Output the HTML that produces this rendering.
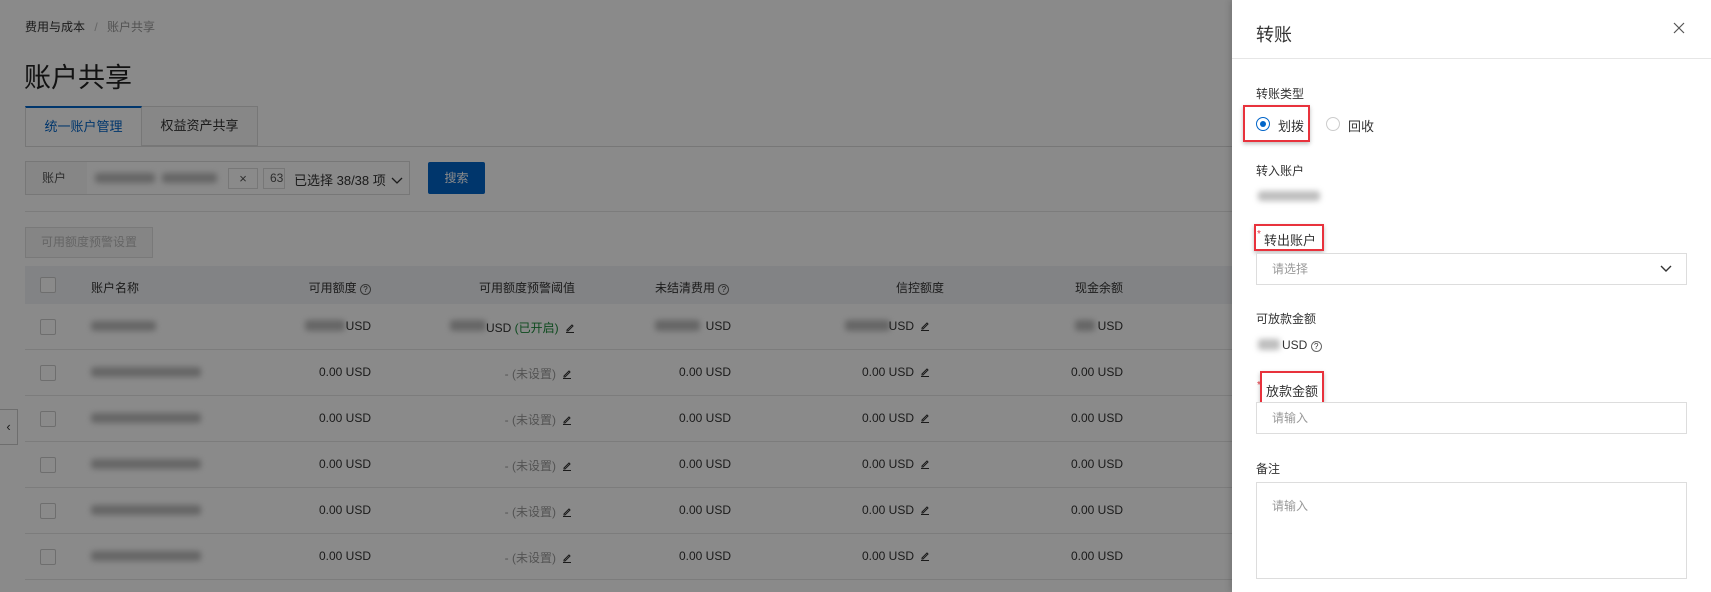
<!DOCTYPE html>
<html><head><meta charset="utf-8"><style>
*{box-sizing:border-box;margin:0;padding:0}
html,body{width:1711px;height:592px;overflow:hidden}
body{position:relative;background:#fff;font-family:"Liberation Sans","Noto Sans CJK SC",sans-serif;font-size:12px;color:#333}
#w{position:absolute;left:0;top:0;width:1711px;height:592px;overflow:hidden}
.a{position:absolute;white-space:nowrap}
.blur{position:absolute;background:#888;filter:blur(3px);border-radius:3px;opacity:.55}
.cb{position:absolute;width:16px;height:16px;border:1px solid #ccc;background:#fff;border-radius:2px}
.row{position:absolute;left:25px;width:1300px;height:46px;border-bottom:1px solid #e6e6e6}
.r{text-align:right}
.ed{display:inline-block;width:10px;height:10px;margin-left:6px;vertical-align:-1px}
#ov{position:absolute;left:0;top:0;width:1232px;height:592px;background:rgba(0,0,0,.46)}
.lbl{font-size:12px;color:#333}
.inp{position:absolute;border:1px solid #ddd;background:#fff;color:#999;font-size:12px}
.red{position:absolute;border:2px solid #e8323c;box-shadow:0 2px 4px rgba(0,0,0,.25)}
.q{display:inline-block;width:11px;height:11px;border:1px solid #666;border-radius:50%;font-size:8px;line-height:9px;text-align:center}
</style></head><body><div id="w">
<div class="a" style="left:25px;top:18px;font-size:12px;color:#333">费用与成本 <span style="color:#bbb;margin:0 6px">/</span> <span style="color:#999">账户共享</span></div>
<div class="a" style="left:24px;top:56px;font-size:27px;color:#222">账户共享</div>
<div class="a" style="left:25px;top:106px;width:117px;height:41px;border:1px solid #ddd;border-top:2px solid #0064c8;border-bottom:none;background:#fff;color:#0064c8;font-size:13px;text-align:center;line-height:38px">统一账户管理</div>
<div class="a" style="left:142px;top:106px;width:116px;height:40px;border:1px solid #ddd;border-left:none;background:#fafafa;font-size:13px;text-align:center;line-height:38px">权益资产共享</div>
<div class="a" style="left:25px;top:146px;width:1210px;border-top:1px solid #ddd"></div>
<div class="a" style="left:25px;top:161px;width:385px;height:34px;border:1px solid #ddd;background:#fff"></div>
<div class="a" style="left:26px;top:162px;width:61px;height:32px;background:#f7f7f7;color:#555;line-height:32px;padding-left:16px">账户</div>
<div class="blur" style="left:95px;top:173px;width:60px;height:10px"></div>
<div class="blur" style="left:162px;top:173px;width:55px;height:10px"></div>
<div class="a" style="left:228px;top:168px;width:30px;height:21px;border:1px solid #ddd;text-align:center;line-height:19px;color:#555;font-size:13px">×</div>
<div class="a" style="left:263px;top:168px;width:22px;height:21px;border:1px solid #ddd;line-height:19px;padding-left:6px;color:#555;overflow:hidden">63</div>
<div class="a" style="left:294px;top:170px;font-size:13px;color:#333">已选择 38/38 项 <svg width="12" height="8" viewBox="0 0 12 8" style="margin-left:2px"><path d="M1 1l5 5 5-5" fill="none" stroke="#333" stroke-width="1.3"/></svg></div>
<div class="a" style="left:428px;top:162px;width:57px;height:32px;background:#0064c8;color:#fff;text-align:center;line-height:32px;border-radius:2px">搜索</div>
<div class="a" style="left:25px;top:211px;width:1210px;border-top:1px solid #e6e6e6"></div>
<div class="a" style="left:25px;top:227px;width:128px;height:31px;border:1px solid #e0e0e0;background:#f5f5f5;color:#bbb;text-align:center;line-height:29px">可用额度预警设置</div>
<div class="a" style="left:25px;top:266px;width:1300px;height:38px;background:#f1f3f6"></div>
<div class="cb" style="left:40px;top:277px"></div>
<div class="a" style="left:91px;top:279px">账户名称</div>
<div class="a r" style="left:200px;width:171px;top:279px">可用额度 <span class="q">?</span></div>
<div class="a r" style="left:400px;width:175px;top:279px">可用额度预警阈值</div>
<div class="a" style="left:655px;top:279px">未结清费用 <span class="q">?</span></div>
<div class="a r" style="left:820px;width:124px;top:279px">信控额度</div>
<div class="a r" style="left:1000px;width:123px;top:279px">现金余额</div>
<div id="rows"></div>
<script>
var h='',E='<svg class="ed" viewBox="0 0 10 10"><path d="M2 7l5-5 1 1-5 5H2zM1 9.5h8" fill="none" stroke="#333"/></svg>';
for(var i=0;i<7;i++){
var t=304+i*46, c=t+15;
h+='<div class="row" style="top:'+t+'px"></div>';
h+='<div class="cb" style="left:40px;top:'+c+'px"></div>';
h+='<div class="blur" style="left:91px;top:'+(c+2)+'px;width:'+(i==0?65:110)+'px;height:10px"></div>';
if(i==0){
h+='<div class="blur" style="left:305px;top:'+(c+1)+'px;width:40px;height:11px"></div><div class="a r" style="left:300px;width:71px;top:'+c+'px">USD</div>';
h+='<div class="blur" style="left:450px;top:'+(c+1)+'px;width:36px;height:11px"></div><div class="a" style="left:486px;top:'+c+'px">USD <span style="color:#1a8a3a">(已开启)</span>'+E+'</div>';
h+='<div class="blur" style="left:655px;top:'+(c+1)+'px;width:45px;height:11px"></div><div class="a r" style="left:650px;width:81px;top:'+c+'px">USD</div>';
h+='<div class="blur" style="left:845px;top:'+(c+1)+'px;width:45px;height:11px"></div><div class="a r" style="left:820px;width:110px;top:'+c+'px">USD'+E+'</div>';
h+='<div class="blur" style="left:1075px;top:'+(c+1)+'px;width:20px;height:11px"></div><div class="a r" style="left:1000px;width:123px;top:'+c+'px">USD</div>';
}else{
h+='<div class="a r" style="left:250px;width:121px;top:'+c+'px">0.00 USD</div>';
h+='<div class="a r" style="left:420px;width:152px;top:'+c+'px;color:#999">- (未设置)'+E+'</div>';
h+='<div class="a r" style="left:620px;width:111px;top:'+c+'px">0.00 USD</div>';
h+='<div class="a r" style="left:800px;width:130px;top:'+c+'px">0.00 USD'+E+'</div>';
h+='<div class="a r" style="left:1000px;width:123px;top:'+c+'px">0.00 USD</div>';
}}
document.getElementById('rows').innerHTML=h;
</script>
<div class="a" style="left:0;top:409px;width:18px;height:36px;border:1px solid #ccc;border-left:none;background:#fff;text-align:center;line-height:34px;color:#333;font-size:13px">‹</div>
<div id="ov"></div>
<div class="a" style="left:1232px;top:0;width:479px;height:592px;background:#fff;box-shadow:-2px 0 6px rgba(0,0,0,.15)"></div>
<div class="a" style="left:1256px;top:21px;font-size:18px;color:#333">转账</div>
<svg class="a" style="left:1673px;top:22px" width="12" height="12" viewBox="0 0 12 12"><path d="M1 1l10 10M11 1L1 11" stroke="#555" stroke-width="1.2"/></svg>
<div class="a" style="left:1232px;top:58px;width:479px;border-top:1px solid #e6e6e6"></div>
<div class="a lbl" style="left:1256px;top:85px">转账类型</div>
<div class="a" style="left:1256px;top:117px;width:14px;height:14px;border:1px solid #0064c8;border-radius:50%"><div style="margin:3px;width:6px;height:6px;border-radius:50%;background:#0064c8"></div></div>
<div class="a" style="left:1278px;top:116px;font-size:13px">划拨</div>
<div class="a" style="left:1326px;top:117px;width:14px;height:14px;border:1px solid #ccc;border-radius:50%"></div>
<div class="a" style="left:1348px;top:116px;font-size:13px">回收</div>
<div class="red" style="left:1243px;top:105px;width:67px;height:37px"></div>
<div class="a lbl" style="left:1256px;top:162px">转入账户</div>
<div class="blur" style="left:1258px;top:191px;width:62px;height:10px"></div>
<div class="a" style="left:1257px;top:229px;color:#e8323c;font-size:10px">*</div>
<div class="a lbl" style="left:1264px;top:230px;font-size:13px">转出账户</div>
<div class="red" style="left:1254px;top:224px;width:70px;height:27px"></div>
<div class="inp" style="left:1256px;top:253px;width:431px;height:32px;line-height:30px;padding-left:15px">请选择</div>
<svg class="a" style="left:1660px;top:265px" width="12" height="8" viewBox="0 0 12 8"><path d="M1 1l5 5 5-5" fill="none" stroke="#333" stroke-width="1.4"/></svg>
<div class="a lbl" style="left:1256px;top:310px">可放款金额</div>
<div class="blur" style="left:1258px;top:339px;width:22px;height:11px"></div>
<div class="a" style="left:1282px;top:338px">USD <span class="q">?</span></div>
<div class="a" style="left:1257px;top:380px;color:#e8323c;font-size:10px">*</div>
<div class="a lbl" style="left:1266px;top:381px;font-size:13px">放款金额</div>
<div class="red" style="left:1260px;top:371px;width:64px;height:35px"></div>
<div class="inp" style="left:1256px;top:402px;width:431px;height:32px;line-height:30px;padding-left:15px">请输入</div>
<div class="a lbl" style="left:1256px;top:460px">备注</div>
<div class="inp" style="left:1256px;top:482px;width:431px;height:97px;padding:14px 15px">请输入</div>
</div></body></html>
